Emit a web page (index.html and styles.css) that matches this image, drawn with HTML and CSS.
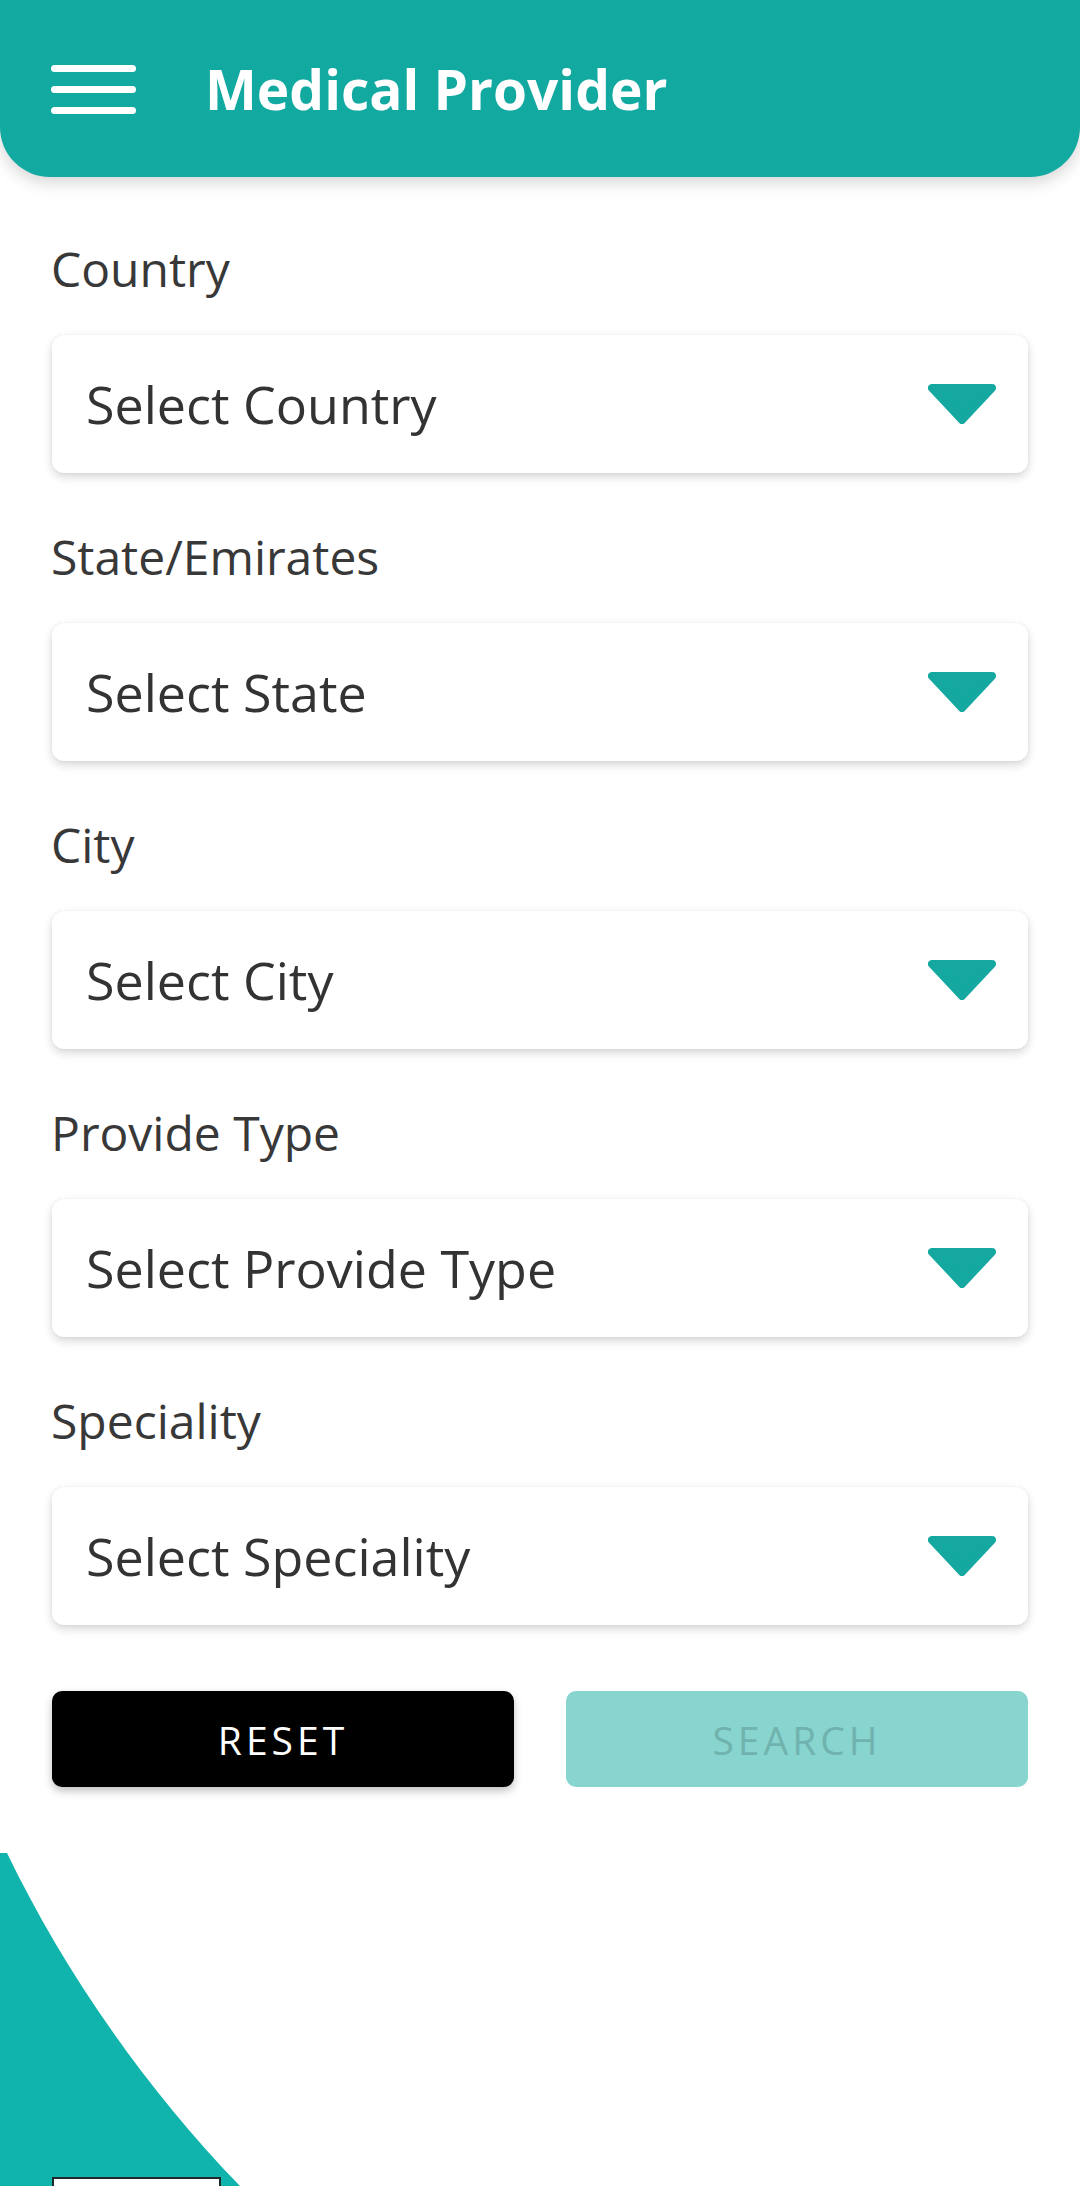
FILE: index.html
```html
<!DOCTYPE html>
<html lang="en">
<head>
<meta charset="utf-8">
<title>Medical Provider</title>
<link rel="stylesheet" href="styles.css">
</head>
<body>
<header class="appbar">
  <div class="menu" aria-label="Menu">
    <span class="menu-line"></span>
    <span class="menu-line"></span>
    <span class="menu-line"></span>
  </div>
  <h1 class="title">Medical Provider</h1>
</header>

<main class="form">
  <div class="field">
    <div class="label">Country</div>
    <div class="select">
      <span class="select-text">Select Country</span>
      <svg class="caret" width="68" height="40" viewBox="0 0 68 40"><polygon points="4,4 64,4 34,36" /></svg>
    </div>
  </div>
  <div class="field">
    <div class="label">State/Emirates</div>
    <div class="select">
      <span class="select-text">Select State</span>
      <svg class="caret" width="68" height="40" viewBox="0 0 68 40"><polygon points="4,4 64,4 34,36" /></svg>
    </div>
  </div>
  <div class="field">
    <div class="label">City</div>
    <div class="select">
      <span class="select-text">Select City</span>
      <svg class="caret" width="68" height="40" viewBox="0 0 68 40"><polygon points="4,4 64,4 34,36" /></svg>
    </div>
  </div>
  <div class="field">
    <div class="label">Provide Type</div>
    <div class="select">
      <span class="select-text">Select Provide Type</span>
      <svg class="caret" width="68" height="40" viewBox="0 0 68 40"><polygon points="4,4 64,4 34,36" /></svg>
    </div>
  </div>
  <div class="field field-last">
    <div class="label">Speciality</div>
    <div class="select">
      <span class="select-text">Select Speciality</span>
      <svg class="caret" width="68" height="40" viewBox="0 0 68 40"><polygon points="4,4 64,4 34,36" /></svg>
    </div>
  </div>

  <div class="buttons">
    <button class="btn btn-reset">RESET</button>
    <button class="btn btn-search">SEARCH</button>
  </div>
</main>

<div class="decor">
  <svg class="wave" width="260" height="333" viewBox="0 0 260 333">
    <path d="M0 0 L7 0 C60 110 140 230 240 333 L0 333 Z" />
  </svg>
  <div class="logo-box"></div>
</div>
</body>
</html>
```

FILE: styles.css
```css
html, body {
  margin: 0;
  padding: 0;
  background: #ffffff;
}

body {
  width: 1080px;
  height: 2186px;
  overflow: hidden;
  font-family: "Open Sans", "Liberation Sans", sans-serif;
}

.appbar {
  height: 177px;
  background: #12a9a1;
  border-radius: 0 0 50px 50px;
  box-shadow: 0 6px 16px rgba(0, 0, 0, 0.16);
  display: flex;
  align-items: center;
  padding-left: 51px;
  box-sizing: border-box;
  position: relative;
  z-index: 2;
}

.menu {
  width: 85px;
  display: flex;
  flex-direction: column;
  gap: 14px;
  margin-top: 2px;
}

.menu-line {
  display: block;
  height: 7px;
  border-radius: 4px;
  background: #ffffff;
}

.title {
  margin: 0 0 0 69px;
  color: #ffffff;
  font-size: 55px;
  font-weight: 700;
  line-height: 1;
  letter-spacing: 0;
}

.form {
  padding: 61px 52px 0 52px;
  display: flex;
  flex-direction: column;
}

.field {
  display: flex;
  flex-direction: column;
  margin-bottom: 53px;
}

.field-last {
  margin-bottom: 66px;
}

.label {
  height: 62px;
  line-height: 62px;
  font-size: 48px;
  color: #383838;
  margin-bottom: 35px;
  margin-left: -1px;
}

.select {
  height: 138px;
  box-sizing: border-box;
  background: #ffffff;
  border-radius: 12px;
  box-shadow: 0 4px 10px rgba(0, 0, 0, 0.16), 0 0 3px rgba(0, 0, 0, 0.06);
  display: flex;
  align-items: center;
  justify-content: space-between;
  padding: 0 32px 0 34px;
}

.select-text {
  font-size: 52px;
  color: #333333;
  line-height: 1;
}

.caret polygon {
  fill: #14a8a0;
  stroke: #14a8a0;
  stroke-width: 8;
  stroke-linejoin: round;
}

.buttons {
  display: grid;
  grid-template-columns: 1fr 1fr;
  gap: 52px;
}

.btn {
  height: 96px;
  border: none;
  border-radius: 10px;
  font-family: "Open Sans", "Liberation Sans", sans-serif;
  font-size: 39px;
  letter-spacing: 4px;
  padding: 0;
  cursor: pointer;
}

.btn-reset {
  background: #000000;
  color: #ffffff;
  box-shadow: 0 4px 8px rgba(0, 0, 0, 0.25);
}

.btn-search {
  background: #88d4cf;
  color: #70b3ae;
}

.decor {
  position: relative;
  height: 333px;
  margin-top: 66px;
}

.wave {
  display: block;
}

.wave path {
  fill: #10b4ac;
}

.logo-box {
  position: absolute;
  left: 52px;
  top: 324px;
  width: 165px;
  height: 20px;
  background: #ffffff;
  border: 2px solid #1f2b2b;
}
```
